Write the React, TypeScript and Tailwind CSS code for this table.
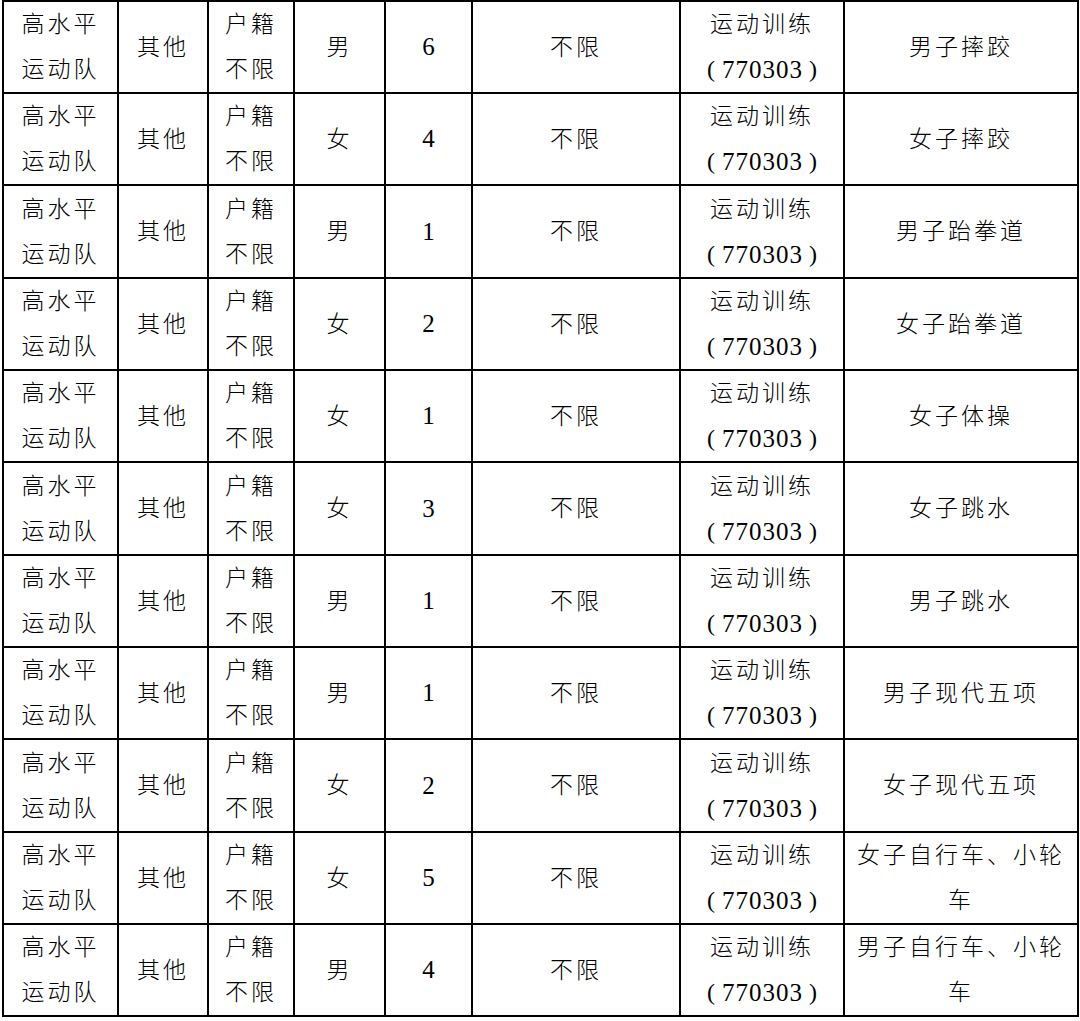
const ROWS: { gender: string; count: string; sport: string[] }[] = [
  { gender: "男", count: "6", sport: ["男子摔跤"] },
  { gender: "女", count: "4", sport: ["女子摔跤"] },
  { gender: "男", count: "1", sport: ["男子跆拳道"] },
  { gender: "女", count: "2", sport: ["女子跆拳道"] },
  { gender: "女", count: "1", sport: ["女子体操"] },
  { gender: "女", count: "3", sport: ["女子跳水"] },
  { gender: "男", count: "1", sport: ["男子跳水"] },
  { gender: "男", count: "1", sport: ["男子现代五项"] },
  { gender: "女", count: "2", sport: ["女子现代五项"] },
  { gender: "女", count: "5", sport: ["女子自行车、小轮", "车"] },
  { gender: "男", count: "4", sport: ["男子自行车、小轮", "车"] },
];

const cell = "border-2 border-black p-0 text-center align-middle";

function Lines({ lines }: { lines: string[] }) {
  return (
    <div className="flex flex-col items-center leading-[45px]">
      {lines.map((l, i) => (
        <span key={i} className="tracking-[3px]">
          {l}
        </span>
      ))}
    </div>
  );
}

export default function App() {
  return (
    <div
      className="min-h-[1021px] bg-white pl-[2px] text-[23px] font-light text-black"
      style={{ fontFamily: '"Liberation Serif", "Noto Sans CJK SC", serif' }}
    >
      <table className="w-[1075px] table-fixed border-collapse">
        <colgroup>
          <col className="w-[115px]" />
          <col className="w-[90px]" />
          <col className="w-[86px]" />
          <col className="w-[91px]" />
          <col className="w-[87px]" />
          <col className="w-[208px]" />
          <col className="w-[164px]" />
          <col className="w-[234px]" />
        </colgroup>
        <tbody>
          {ROWS.map((r, i) => (
            <tr key={i} className={i % 3 === 2 ? "h-[93px]" : "h-[92px]"}>
              <td className={cell}>
                <Lines lines={["高水平", "运动队"]} />
              </td>
              <td className={cell}>
                <Lines lines={["其他"]} />
              </td>
              <td className={cell}>
                <Lines lines={["户籍", "不限"]} />
              </td>
              <td className={cell}>
                <Lines lines={[r.gender]} />
              </td>
              <td className={cell}>
                <span className="text-[25px] font-medium">{r.count}</span>
              </td>
              <td className={cell}>
                <Lines lines={["不限"]} />
              </td>
              <td className={cell}>
                <div className="flex flex-col items-center leading-[45px]">
                  <span className="tracking-[3px]">运动训练</span>
                  <span className="flex items-center">
                    <span className="mr-[7px] text-[24px]">(</span>
                    <span className="text-[25px] tracking-[1px]">770303</span>
                    <span className="ml-[6px] text-[24px]">)</span>
                  </span>
                </div>
              </td>
              <td className={cell}>
                <Lines lines={r.sport} />
              </td>
            </tr>
          ))}
        </tbody>
      </table>
    </div>
  );
}
